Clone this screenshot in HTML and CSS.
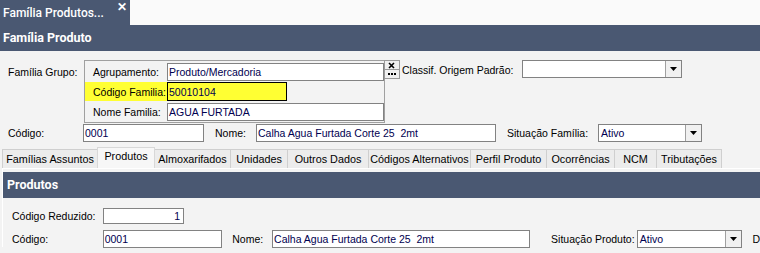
FILE: index.html
```html
<!DOCTYPE html>
<html lang="pt">
<head>
<meta charset="utf-8">
<title>Família Produtos</title>
<link rel="stylesheet" href="styles.css">
</head>
<body>
<div class="topbar">
  <div class="doctab"><span class="doctab-title">Família Produtos...</span><span class="doctab-close">✕</span></div>
</div>
<div class="header">Família Produto</div>

<div class="form">
  <div class="row row-group">
    <span class="lbl lbl-grupo">Família Grupo:</span>
    <div class="groupbox">
      <div class="gb-row"><span class="gb-lbl">Agrupamento:</span><span class="inp gb-inp">Produto/Mercadoria</span></div>
      <div class="gb-row gb-hl"><span class="gb-lbl">Código Familia:</span><span class="inp gb-inp-hl">50010104</span></div>
      <div class="gb-row"><span class="gb-lbl">Nome Familia:</span><span class="inp gb-inp">AGUA FURTADA</span></div>
    </div>
    <div class="btnpair">
      <span class="bp bp-x"><svg width="8" height="7" viewBox="0 0 8 7"><path d="M1 1L6 6M6 1L1 6" stroke="#000" stroke-width="1.6"/></svg></span>
      <span class="bp bp-dots"><svg width="9" height="3" viewBox="0 0 9 3"><rect x="0" y="0" width="2" height="2" fill="#000"/><rect x="3" y="0" width="2" height="2" fill="#000"/><rect x="6" y="0" width="2" height="2" fill="#000"/></svg></span>
    </div>
    <span class="lbl lbl-classif">Classif. Origem Padrão:</span>
    <div class="sel sel-classif"><span class="sel-val"></span><span class="sel-btn"><svg width="7" height="4" viewBox="0 0 7 4"><path d="M0 0H7L3.5 4Z" fill="#000"/></svg></span></div>
  </div>

  <div class="row row-cod">
    <span class="lbl lbl-cod">Código:</span>
    <span class="inp inp-cod">0001</span>
    <span class="lbl lbl-nome">Nome:</span>
    <span class="inp inp-nome">Calha Agua Furtada Corte 25&nbsp; 2mt</span>
    <span class="lbl lbl-sit">Situação Família:</span>
    <div class="sel sel-sit"><span class="sel-val">Ativo</span><span class="sel-btn"><svg width="7" height="4" viewBox="0 0 7 4"><path d="M0 0H7L3.5 4Z" fill="#000"/></svg></span></div>
  </div>
</div>

<div class="tabs">
  <span class="tab w97">Famílias Assuntos</span>
  <span class="tab active w57">Produtos</span>
  <span class="tab w76">Almoxarifados</span>
  <span class="tab w57">Unidades</span>
  <span class="tab w84">Outros Dados</span>
  <span class="tab w101">Códigos Alternativos</span>
  <span class="tab w76">Perfil Produto</span>
  <span class="tab w68">Ocorrências</span>
  <span class="tab w44">NCM</span>
  <span class="tab w64">Tributações</span>
</div>

<div class="panel">
  <div class="panel-header">Produtos</div>
  <div class="pform">
    <div class="prow prow1">
      <span class="lbl plbl">Código Reduzido:</span>
      <span class="inp inp-red">1</span>
    </div>
    <div class="prow prow2">
      <span class="lbl plbl">Código:</span>
      <span class="inp inp-pcod">0001</span>
      <span class="lbl plbl-nome">Nome:</span>
      <span class="inp inp-pnome">Calha Agua Furtada Corte 25&nbsp; 2mt</span>
      <span class="lbl plbl-sit">Situação Produto:</span>
      <div class="sel sel-psit"><span class="sel-val">Ativo</span><span class="sel-btn"><svg width="7" height="4" viewBox="0 0 7 4"><path d="M0 0H7L3.5 4Z" fill="#000"/></svg></span></div>
      <span class="lbl plbl-d">D</span>
    </div>
  </div>
</div>
</body>
</html>
```

FILE: styles.css
```css
html, body {
  margin: 0;
  padding: 0;
}
body {
  width: 760px;
  height: 253px;
  overflow: hidden;
  background: #f3f3f3;
  font-family: "Liberation Sans", Arial, sans-serif;
  font-size: 10.5px;
  color: #000;
}

.topbar {
  display: flex;
  height: 25px;
  background: #fafafa;
}
.doctab {
  width: 130px;
  background: #4a5872;
  color: #fff;
  display: flex;
  align-items: flex-start;
  box-sizing: border-box;
  padding-left: 3px;
}
.doctab-title {
  font-family: Roboto, "Liberation Sans", sans-serif;
  font-weight: 500;
  font-size: 12px;
  line-height: 24px;
  padding-top: 1px;
}
.doctab-close {
  margin-left: 13px;
  font-weight: bold;
  font-size: 12px;
  line-height: 14px;
}

.header {
  height: 26px;
  background: #4a5872;
  color: #fff;
  font-family: Roboto, "Liberation Sans", sans-serif;
  font-weight: bold;
  font-size: 12.5px;
  line-height: 26px;
  padding-left: 3px;
}

.form {
  padding-top: 9px;
}
.row {
  display: flex;
  align-items: center;
}
.row-group {
  align-items: flex-start;
  height: 62px;
}
.lbl {
  white-space: nowrap;
}
.lbl-grupo {
  width: 76px;
  padding-left: 8px;
  line-height: 20px;
  padding-top: 2px;
}
.groupbox {
  width: 301px;
  border: 1px solid #a0a0a0;
  padding-top: 1px;
  box-sizing: border-box;
  display: flex;
  flex-direction: column;
  gap: 1px;
  height: 63px;
}
.gb-row {
  display: flex;
  align-items: center;
  height: 19px;
}
.gb-lbl {
  width: 74px;
  padding-left: 8px;
  white-space: nowrap;
  overflow: hidden;
}
.gb-hl {
  background: #ffff33;
  width: 202px;
}
.inp {
  display: flex;
  align-items: center;
  box-sizing: border-box;
  height: 18px;
  background: #fff;
  border: 1px solid #828282;
  color: #000050;
  padding-left: 1px;
  white-space: nowrap;
  overflow: hidden;
}
.gb-inp {
  width: 217px;
}
.gb-inp-hl {
  width: 120px;
  background: #ffff33;
  border-color: #000;
  height: 19px;
}
.btnpair {
  display: flex;
  flex-direction: column;
  width: 16px;
  height: 19px;
  margin-left: -1px;
  box-sizing: border-box;
  border: 1px solid #9a9a9a;
  background: #f0f0f0;
}
.bp {
  flex: 1;
  display: flex;
  align-items: center;
  justify-content: center;
}
.bp-x {
  border-bottom: 1px solid #9a9a9a;
}
.lbl-classif {
  margin-left: 2px;
  width: 120px;
  line-height: 20px;
}
.sel {
  display: flex;
  box-sizing: border-box;
  height: 18px;
  background: #fff;
  border: 1px solid #828282;
  color: #000050;
}
.sel-val {
  flex: 1;
  padding-left: 2px;
  display: flex;
  align-items: center;
}
.sel-btn {
  width: 15px;
  background: #f0f0f0;
  border-left: 1px solid #a0a0a0;
  display: flex;
  align-items: center;
  justify-content: center;
}
.sel-classif {
  width: 160px;
}

.row-cod {
  margin-top: 2px;
  height: 18px;
}
.lbl-cod {
  width: 75px;
  padding-left: 8px;
}
.inp-cod {
  width: 121px;
}
.lbl-nome {
  width: 41px;
  padding-left: 11px;
}
.inp-nome {
  width: 240px;
}
.lbl-sit {
  width: 91px;
  padding-left: 11px;
}
.sel-sit {
  width: 104px;
}

.tabs {
  display: flex;
  align-items: flex-end;
  margin-top: 6px;
  padding-left: 2px;
  height: 20px;
  font-size: 10.8px;
}
.tab {
  box-sizing: border-box;
  height: 19px;
  display: flex;
  align-items: center;
  justify-content: center;
  background: #ececec;
  border: 1px solid #cfcfcf;
  border-bottom: none;
  margin-right: -1px;
  white-space: nowrap;
  color: #000;
}
.tab.active {
  height: 21px;
  background: #f7f7f7;
  align-items: flex-start;
  padding-top: 2px;
  position: relative;
  z-index: 1;
  border-color: #d8d8d8;
}
.w97 { width: 96px; }
.w57 { width: 58px; }
.w76 { width: 77px; }
.w84 { width: 82px; }
.w101 { width: 103px; }
.w68 { width: 69px; }
.w44 { width: 43px; }
.w64 { width: 66px; }

.panel {
  margin-left: 2px;
  border-top: 1px solid #fff;
  border-left: 1px solid #fff;
  padding-top: 3px;
}
.panel-header {
  height: 26px;
  background: #4a5872;
  color: #fff;
  font-family: Roboto, "Liberation Sans", sans-serif;
  font-weight: bold;
  font-size: 12.5px;
  line-height: 26px;
  padding-left: 4px;
}
.pform {
  padding-top: 9px;
  display: flex;
  flex-direction: column;
  gap: 6px;
}
.prow {
  display: flex;
  align-items: center;
  height: 17px;
}
.plbl {
  width: 91px;
  padding-left: 9px;
}
.inp-red {
  width: 81px;
  height: 16px;
  justify-content: flex-end;
  padding-right: 3px;
}
.inp-pcod {
  width: 120px;
  height: 18px;
}
.plbl-nome {
  width: 40px;
  padding-left: 10px;
}
.inp-pnome {
  width: 259px;
  height: 18px;
}
.plbl-sit {
  width: 86px;
  padding-left: 21px;
}
.sel-psit {
  width: 106px;
}
.plbl-d {
  padding-left: 10px;
}
```
